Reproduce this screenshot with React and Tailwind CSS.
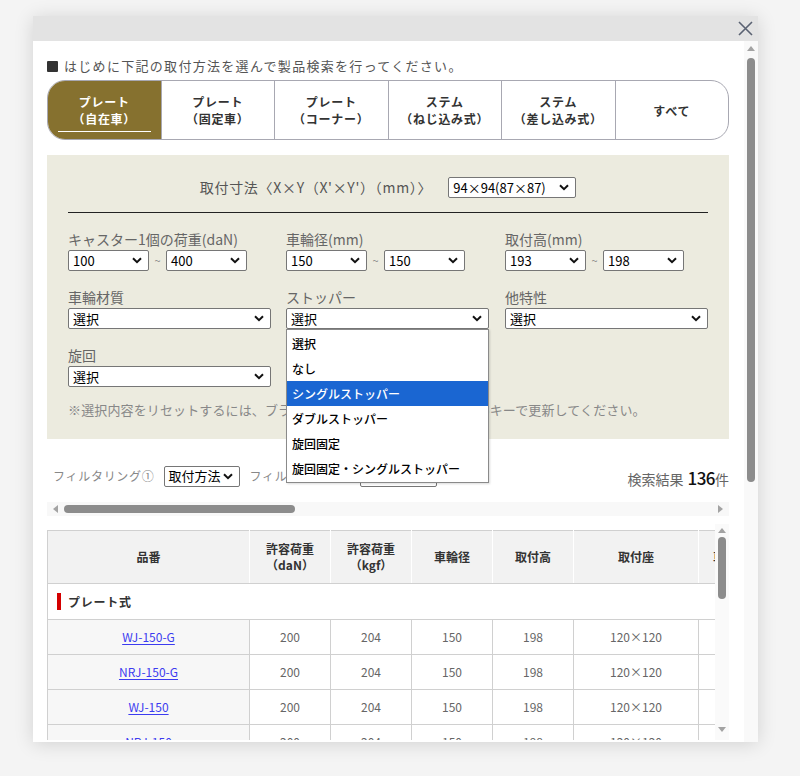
import React from "react";

const Chevron = () => (
  <svg width="10" height="7" viewBox="0 0 10 7" className="shrink-0">
    <path d="M1 1.2 L5 5.2 L9 1.2" fill="none" stroke="#111" strokeWidth="2" />
  </svg>
);

const Select = ({ value, className = "" }) => (
  <div
    className={`flex items-center justify-between h-[21px] bg-white border border-[#767676] rounded-[2px] pl-[4px] pr-[6px] text-[13px] text-black leading-[18px] ${className}`}
  >
    <span className="whitespace-nowrap">{value}</span>
    <Chevron />
  </div>
);

const Range = ({ from, to }) => (
  <div className="flex items-center gap-[4px]">
    <Select value={from} className="w-[81px]" />
    <span className="text-[11px] text-[#888] w-[9px] text-center">~</span>
    <Select value={to} className="w-[81px]" />
  </div>
);

const Label = ({ children }) => (
  <div className="text-[14px] leading-[18px] text-[#666] mb-[2px]">{children}</div>
);

const tabs = [
  ["プレート", "（自在車）"],
  ["プレート", "（固定車）"],
  ["プレート", "（コーナー）"],
  ["ステム", "（ねじ込み式）"],
  ["ステム", "（差し込み式）"],
  ["すべて"],
];

const stopperOptions = [
  "選択",
  "なし",
  "シングルストッパー",
  "ダブルストッパー",
  "旋回固定",
  "旋回固定・シングルストッパー",
];

const rows = [
  ["WJ-150-G", "200", "204", "150", "198", "120×120"],
  ["NRJ-150-G", "200", "204", "150", "198", "120×120"],
  ["WJ-150", "200", "204", "150", "198", "120×120"],
  ["NRJ-150", "200", "204", "150", "198", "120×120"],
];

const Triangle = ({ dir = "up" }) => (
  <svg width="8" height="5" viewBox="0 0 8 5" className="shrink-0">
    {dir === "up" ? <path d="M0 5 L4 0 L8 5 Z" fill="#a3a3a3" /> : <path d="M0 0 L4 5 L8 0 Z" fill="#a3a3a3" />}
  </svg>
);

const SideTriangle = ({ dir = "left" }) => (
  <svg width="5" height="8" viewBox="0 0 5 8" className="shrink-0">
    {dir === "left" ? <path d="M5 0 L0 4 L5 8 Z" fill="#a3a3a3" /> : <path d="M0 0 L5 4 L0 8 Z" fill="#a3a3a3" />}
  </svg>
);

export default function App() {
  return (
    <div className="min-h-screen bg-[#f4f4f4] pt-[16px] pl-[33px] font-['Noto_Sans_CJK_JP','Noto_Sans',sans-serif]">
      <div className="w-[725px] h-[726px] bg-white flex flex-col shadow-[0_2px_18px_rgba(0,0,0,0.14)]">
        {/* Header */}
        <div className="h-[25px] bg-[#e3e3e3] flex items-center justify-end pr-[4px] shrink-0">
          <svg width="17" height="17" viewBox="0 0 17 17">
            <path d="M2 2 L15 15 M15 2 L2 15" stroke="#5a6272" strokeWidth="1.6" fill="none" />
          </svg>
        </div>

        <div className="flex flex-1 min-h-0">
          {/* Content */}
          <div className="flex-1 min-w-0 overflow-hidden pl-[14px] pr-[15px] pt-[16px]">
            <p className="text-[13px] leading-[18px] tracking-[0.1em] text-[#555] flex items-center">
              <span className="inline-block w-[11px] h-[11px] bg-[#333] rounded-[1px] mr-[6px]"></span>
              はじめに下記の取付方法を選んで製品検索を行ってください。
            </p>

            {/* Tabs */}
            <div className="mt-[5px] flex h-[60px] border border-[#a8a8b2] rounded-[18px] overflow-hidden">
              {tabs.map((t, i) => (
                <div
                  key={i}
                  className={`relative flex-1 flex flex-col items-center justify-center text-[12px] leading-[17px] tracking-[0.06em] ${
                    i === 0 ? "bg-[#86712f] text-white font-bold" : "border-l border-[#a8a8b2] text-[#333] font-semibold"
                  }`}
                >
                  {t.map((line, j) => (
                    <span key={j}>{line}</span>
                  ))}
                  {i === 0 && (
                    <span className="absolute left-[10px] right-[10px] bottom-[7px] h-[1px] bg-white"></span>
                  )}
                </div>
              ))}
            </div>

            {/* Search form */}
            <div className="mt-[15px] bg-[#ecebdf] px-[21px] pt-[22px] pb-[20px]">
              <div className="flex items-center justify-center gap-[16px]">
                <span className="text-[14px] tracking-[0.05em] text-[#555]">取付寸法〈X×Y（X'×Y'）（mm）〉</span>
                <Select value="94×94(87×87)" className="w-[128px]" />
              </div>
              <div className="mt-[14px] h-[1px] bg-[#222]"></div>

              <div className="mt-[17px] grid grid-cols-[218px_219px_203px]">
                <div>
                  <Label>キャスター1個の荷重(daN)</Label>
                  <Range from="100" to="400" />
                </div>
                <div>
                  <Label>車輪径(mm)</Label>
                  <Range from="150" to="150" />
                </div>
                <div>
                  <Label>取付高(mm)</Label>
                  <Range from="193" to="198" />
                </div>
              </div>

              <div className="mt-[17px] grid grid-cols-[218px_219px_203px]">
                <div>
                  <Label>車輪材質</Label>
                  <Select value="選択" className="w-[203px]" />
                </div>
                <div className="relative z-10">
                  <Label>ストッパー</Label>
                  <div className="relative">
                    <Select value="選択" className="w-[203px]" />
                    <div className="absolute left-0 top-full w-[203px] bg-white border border-[#8a8a8a] py-[1px] shadow-[1px_1px_2px_rgba(0,0,0,0.15)]">
                      {stopperOptions.map((o, i) => (
                        <div
                          key={o}
                          className={`h-[25px] flex items-center px-[5px] text-[12px] font-medium ${
                            i === 2 ? "bg-[#1a66d2] text-white" : "text-black"
                          }`}
                        >
                          {o}
                        </div>
                      ))}
                    </div>
                  </div>
                </div>
                <div>
                  <Label>他特性</Label>
                  <Select value="選択" className="w-[203px]" />
                </div>
              </div>

              <div className="mt-[17px]">
                <Label>旋回</Label>
                <Select value="選択" className="w-[203px]" />
              </div>

              <p className="mt-[14px] text-[13px] leading-[18px] tracking-[0.01em] text-[#888] whitespace-nowrap">
                ※選択内容をリセットするには、ブラウザの再読み込みボタンまたはF5キーで更新してください。
              </p>
            </div>

            {/* Filter row */}
            <div className="mt-[27px] h-[20px] flex items-center justify-between pl-[6px]">
              <div className="flex items-center text-[12px] tracking-[0.06em] text-[#888]">
                <span>フィルタリング①</span>
                <Select value="取付方法" className="w-[76px] ml-[9px] h-[20px] text-[12px] tracking-normal" />
                <span className="ml-[10px]">フィルタリング②</span>
                <Select value="選択" className="w-[77px] ml-[9px] h-[20px] text-[12px] tracking-normal" />
              </div>
              <div className="flex items-baseline text-[14px] leading-[20px] text-[#666] translate-y-[2px]">
                <span>検索結果</span>
                <span className="ml-[4px] text-[17px] font-medium text-[#111] tracking-[-0.03em]">136</span>
                <span>件</span>
              </div>
            </div>

            {/* Horizontal scrollbar */}
            <div className="mt-[16px] h-[14px] bg-[#f8f8f8] flex items-center px-[6px] gap-[6px]">
              <SideTriangle dir="left" />
              <div className="h-[8px] w-[231px] rounded-full bg-[#8c8c8c]"></div>
              <div className="flex-1"></div>
              <SideTriangle dir="right" />
            </div>

            {/* Table */}
            <div className="mt-[8px] flex h-[216px]">
              <div className="flex-1 min-w-0 overflow-hidden pt-[6px]">
                <table className="table-fixed border-collapse w-[770px] text-[12px]">
                  <colgroup>
                    <col className="w-[202px]" />
                    <col className="w-[81px]" />
                    <col className="w-[81px]" />
                    <col className="w-[81px]" />
                    <col className="w-[81px]" />
                    <col className="w-[125px]" />
                    <col className="w-[119px]" />
                  </colgroup>
                  <thead>
                    <tr className="h-[53px] bg-[#f2f2f2] text-[#333]">
                      <th className="border border-[#d0d0d0] border-r-white font-bold">品番</th>
                      <th className="border border-[#d0d0d0] border-x-white leading-[16px] font-bold">
                        許容荷重
                        <br />
                        （daN）
                      </th>
                      <th className="border border-[#d0d0d0] border-x-white leading-[16px] font-bold">
                        許容荷重
                        <br />
                        （kgf）
                      </th>
                      <th className="border border-[#d0d0d0] border-x-white font-bold">車輪径</th>
                      <th className="border border-[#d0d0d0] border-x-white font-bold">取付高</th>
                      <th className="border border-[#d0d0d0] border-x-white font-bold">取付座</th>
                      <th className="border border-[#d0d0d0] border-l-white text-left pl-[14px] font-bold">車輪材質</th>
                    </tr>
                  </thead>
                  <tbody>
                    <tr className="h-[36px]">
                      <td colSpan={7} className="border border-[#d0d0d0] bg-white px-[9px]">
                        <div className="flex items-center gap-[7px]">
                          <span className="w-[4px] h-[17px] bg-[#d40000]"></span>
                          <span className="text-[12px] font-bold text-[#333] tracking-[0.06em]">プレート式</span>
                        </div>
                      </td>
                    </tr>
                    {rows.map((r) => (
                      <tr key={r[0]} className="h-[35px] text-center">
                        <td className="border border-[#d0d0d0] bg-[#f7f7f7]">
                          <a className="text-[#3c3cf0] underline underline-offset-2">{r[0]}</a>
                        </td>
                        {r.slice(1).map((c, i) => (
                          <td key={i} className="border border-[#d0d0d0] text-[#666]">
                            {c}
                          </td>
                        ))}
                        <td className="border border-[#d0d0d0] text-[#666]"></td>
                      </tr>
                    ))}
                  </tbody>
                </table>
              </div>
              {/* Inner vertical scrollbar */}
              <div className="w-[14px] bg-[#fafafa] flex flex-col items-center pt-[4px] pb-[8px]">
                <Triangle dir="up" />
                <div className="mt-[4px] w-[8px] h-[62px] rounded-full bg-[#8c8c8c]"></div>
                <div className="flex-1"></div>
                <Triangle dir="down" />
              </div>
            </div>
          </div>

          {/* Outer vertical scrollbar */}
          <div className="w-[14px] bg-[#f9f9f9] flex flex-col items-center pt-[5px]">
            <Triangle dir="up" />
            <div className="mt-[7px] w-[8px] h-[424px] rounded-full bg-[#8c8c8c]"></div>
          </div>
        </div>
      </div>
    </div>
  );
}
